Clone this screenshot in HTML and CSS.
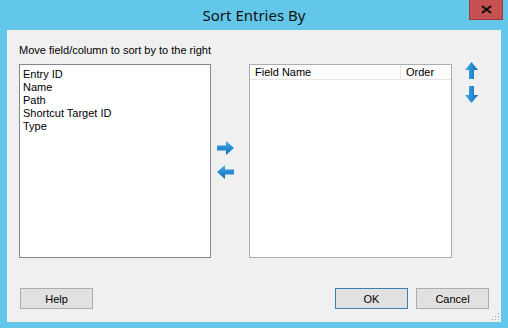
FILE: index.html
```html
<!DOCTYPE html>
<html lang="en">
<head>
    <meta charset="UTF-8">
    <title>Sort Entries By</title>
    <link rel="stylesheet" href="styles.css">
</head>
<body>
<svg width="0" height="0" class="defs">
    <defs>
        <linearGradient id="gradV" x1="0" y1="0" x2="0" y2="1">
            <stop offset="0" stop-color="#42aef0"/>
            <stop offset="1" stop-color="#0f6db5"/>
        </linearGradient>
        <linearGradient id="gradH" x1="0" y1="0" x2="1" y2="0">
            <stop offset="0" stop-color="#42aef0"/>
            <stop offset="1" stop-color="#0f6db5"/>
        </linearGradient>
    </defs>
</svg>
<div class="window">
    <div class="titlebar">
        <span class="title">Sort Entries By</span>
        <button class="close-btn" title="Close">
            <svg width="11" height="9" viewBox="0 0 11 9"><path d="M1 1 L10 8 M10 1 L1 8" stroke="#111" stroke-width="2.2"/></svg>
        </button>
    </div>
    <div class="client">
        <div class="hint">Move field/column to sort by to the right</div>
        <div class="lists">
            <ul class="listbox">
                <li>Entry ID</li>
                <li>Name</li>
                <li>Path</li>
                <li>Shortcut Target ID</li>
                <li>Type</li>
            </ul>
            <div class="move-col">
                <svg class="arrow" width="17" height="14" viewBox="0 0 17 14">
                    <path d="M0 4.5 H9 V0 L17 7 L9 14 V9.5 H0 Z" fill="url(#gradV)"/>
                </svg>
                <svg class="arrow" width="17" height="14" viewBox="0 0 17 14">
                    <path d="M17 4.5 H8 V0 L0 7 L8 14 V9.5 H17 Z" fill="url(#gradV)"/>
                </svg>
            </div>
            <div class="listview">
                <div class="lv-header">
                    <div class="col-name">Field Name</div>
                    <div class="col-order">Order</div>
                </div>
            </div>
            <div class="order-col">
                <svg class="arrow" width="13" height="17" viewBox="0 0 13 17">
                    <path d="M4 17 V8 H0 L6.5 0 L13 8 H9 V17 Z" fill="url(#gradH)"/>
                </svg>
                <svg class="arrow" width="13" height="17" viewBox="0 0 13 17">
                    <path d="M4 0 V9 H0 L6.5 17 L13 9 H9 V0 Z" fill="url(#gradH)"/>
                </svg>
            </div>
        </div>
        <div class="buttons">
            <button class="btn">Help</button>
            <span class="spacer"></span>
            <button class="btn btn-default">OK</button>
            <button class="btn">Cancel</button>
        </div>
        <div class="grip"></div>
    </div>
</div>
</body>
</html>
```

FILE: styles.css
```css
body {
    margin: 0;
    padding: 0;
    background-color: #63c7e9;
    font-family: "Liberation Sans", Arial, sans-serif;
    font-size: 11px;
    color: #000;
}
.defs {
    position: absolute;
}
.window {
    width: 508px;
    height: 328px;
    display: flex;
    flex-direction: column;
}
.titlebar {
    height: 30px;
    position: relative;
    display: flex;
    align-items: center;
    justify-content: center;
}
.title {
    font-family: "Noto Sans", sans-serif;
    font-size: 15px;
    color: #111;
    margin-top: -1px;
}
.close-btn {
    position: absolute;
    top: 0;
    left: 469px;
    width: 34px;
    height: 20px;
    padding: 0;
    background-color: #c75050;
    border: 1px solid #9a3a3a;
    border-top: none;
    display: flex;
    align-items: center;
    justify-content: center;
}
.client {
    margin: 0 7px 6px 7px;
    flex: 1;
    background-color: #f0f0f0;
    position: relative;
    padding: 0 12px;
    display: flex;
    flex-direction: column;
}
.hint {
    margin-top: 14px;
    height: 20px;
}
.lists {
    display: flex;
    height: 194px;
}
.lists > * {
    flex-shrink: 0;
    box-sizing: border-box;
}
.listbox {
    list-style: none;
    margin: 0;
    padding: 3px 3px;
    width: 192px;
    background: white;
    border: 1px solid #828790;
}
.listbox li {
    height: 13px;
    line-height: 13px;
}
.move-col {
    width: 38px;
    display: flex;
    flex-direction: column;
    align-items: flex-start;
    padding-top: 77px;
    padding-left: 6px;
    gap: 10px;
}
.listview {
    width: 203px;
    background: white;
    border: 1px solid #abadb3;
}
.lv-header {
    display: flex;
    height: 14px;
    border-bottom: 1px solid #e5e5e5;
    background: #fcfcfc;
}
.lv-header div {
    line-height: 14px;
    padding-left: 5px;
    box-sizing: border-box;
}
.col-name {
    width: 151px;
    border-right: 1px solid #e5e5e5;
}
.col-order {
    flex: 1;
    padding-left: 4px;
}
.order-col {
    width: 37px;
    display: flex;
    flex-direction: column;
    align-items: center;
    gap: 7px;
    margin-top: -2px;
    padding-left: 2px;
}
.buttons {
    display: flex;
    margin-top: 30px;
    gap: 8px;
    padding-left: 1px;
}
.spacer {
    flex: 1;
}
.btn {
    width: 73px;
    height: 21px;
    padding: 0;
    background-color: #e1e1e1;
    border: 1px solid #adadad;
    font-family: "Liberation Sans", Arial, sans-serif;
    font-size: 11px;
    color: #000;
}
.btn-default {
    border-color: #3c7fb1;
}
.grip {
    position: absolute;
    right: 2px;
    bottom: 2px;
    width: 8px;
    height: 8px;
    background-image: radial-gradient(circle, #a0a0a0 0.8px, transparent 1px);
    background-size: 3px 3px;
    clip-path: polygon(100% 0, 100% 100%, 0 100%);
}
```
